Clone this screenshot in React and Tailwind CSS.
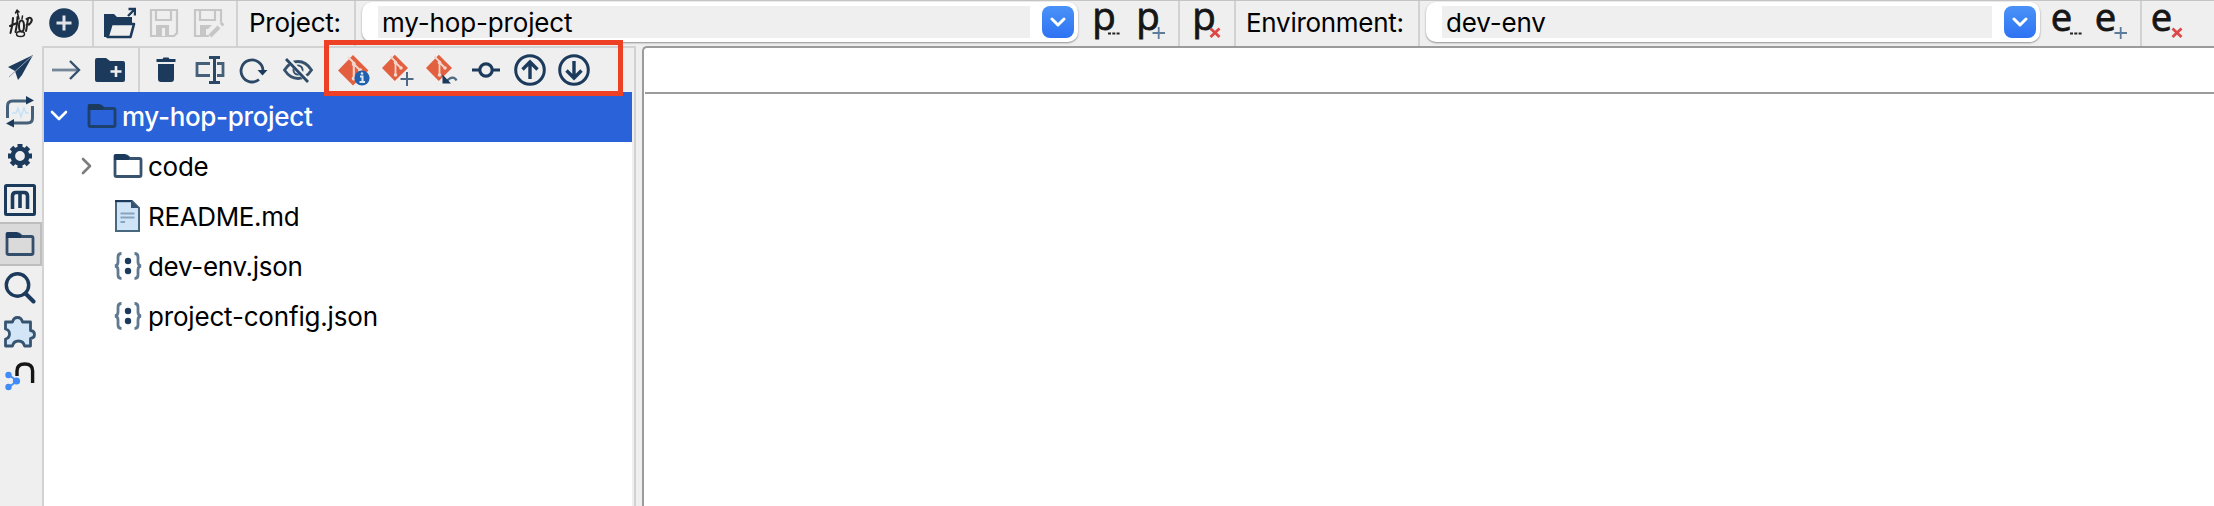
import React from "react";

const NAVY = "#1c3b5c";

const Icon = ({ children, className = "" }) => (
  <svg viewBox="0 0 32 32" width="32" height="32" fill="none" className={"shrink-0 " + className}>
    {children}
  </svg>
);

const Sep = ({ className = "" }) => <div className={"w-[2px] shrink-0 self-stretch bg-[#d2d2d2] " + className} />;

/* ---------- main toolbar ---------- */
const HopLogo = () => (
  <Icon>
    <g stroke="#222" strokeWidth="2" strokeLinecap="round" strokeLinejoin="round">
      <path d="M9 11c0 6-1 10-2.500 15M13.500 10c0 6-1 11-2 15M6 19l7-3" />
      <ellipse cx="17.500" cy="19" rx="2.500" ry="5.500" />
      <path d="M24 12c-1 5-1 8-2 12M22.500 12c4-3 7 0 4 4-1 2-3 2-4 2" />
      <path d="M15 12l-2-8M11.500 6l1.500-3 2 2M18 12l.5-3" strokeWidth="1.500" />
      <ellipse cx="16.500" cy="27" rx="4" ry="2.500" strokeWidth="1.500" />
    </g>
  </Icon>
);
const AddCircle = () => (
  <Icon>
    <circle cx="16" cy="16" r="14.800" fill={NAVY} />
    <path d="M16 8.500v15M8.500 16h15" stroke="#dfe3e7" strokeWidth="3" />
  </Icon>
);
const OpenFolder = () => (
  <Icon>
    <path d="M0 7h10l3 3h15v7H7L3 30H0z" fill={NAVY} />
    <path d="M7.500 17h22.500l-3.500 13H3.500z" fill="#efefef" stroke={NAVY} strokeWidth="2.600" strokeLinejoin="round" />
    <path d="M24 9l6-6M24.500 2H31v6.500" stroke={NAVY} strokeWidth="2.400" />
  </Icon>
);
const Save = () => (
  <Icon>
    <path d="M3 3h26v23l-3 3H3z" stroke="#c6c6c6" strokeWidth="2.200" />
    <path d="M8 3v10h15V3" stroke="#c6c6c6" strokeWidth="2.200" />
    <path d="M8 18h13v11H8z" fill="#c6c6c6" />
    <path d="M14 21h3v8h-3z" fill="#efefef" />
  </Icon>
);
const SaveAs = () => (
  <Icon>
    <path d="M17 29H3V3h26v12" stroke="#c6c6c6" strokeWidth="2.200" />
    <path d="M8 3v10h15V3" stroke="#c6c6c6" strokeWidth="2.200" />
    <path d="M8 18h12l-4 4-2 0v7H8z" fill="#c6c6c6" />
    <path d="M18 29l9-9M29 18l2-2" stroke="#c6c6c6" strokeWidth="4" />
  </Icon>
);

const Dots = () => <path d="M16 26.500h3M20.300 26.500h3M24.600 26.500h3" stroke="#222" strokeWidth="2.200" />;
const Plus = () => <path d="M22.700 20v12M16.500 26h12.500" stroke="#5d7b9b" strokeWidth="1.800" />;
const Cross = () => <path d="M18.500 21.500l9 8.500M27.500 21.500l-9 8.500" stroke="#dc4747" strokeWidth="2.800" />;
const GLYPHS = {
  p: { x: 0.3, y: 22.6, length: 23.5 },
  e: { x: -3.2, y: 23.8, length: 21.5 },
};
const LetterIcon = ({ letter, children, className = "" }) => (
  <Icon className={"overflow-visible " + className}>
    <text
      x={GLYPHS[letter].x}
      y={GLYPHS[letter].y}
      fontSize="38"
      fill="#161616"
      stroke="#161616"
      strokeWidth=".8"
      fontFamily="'Open Sans', 'Noto Sans', sans-serif"
      textLength={GLYPHS[letter].length}
      lengthAdjust="spacingAndGlyphs"
    >
      {letter}
    </text>
    {children}
  </Icon>
);

const Combo = ({ value, className }) => (
  <div className={"mt-[1px] flex h-[40px] shrink-0 items-start rounded-[10px] bg-white shadow-[0_1px_2px_rgba(0,0,0,0.4)] " + className}>
    <div className="mt-[4px] ml-[16px] flex h-[32px] flex-1 items-center bg-[#efefef] pt-[2px] pl-[4px]">
      <span className="text-[26px] leading-none tracking-[-0.15px]">{value}</span>
    </div>
    <div className="mt-[4px] mr-[4px] ml-[12px] flex size-[32px] items-center justify-center rounded-[8px] bg-linear-to-b from-[#4a92f8] to-[#2e72f2]">
      <svg width="16" height="10" viewBox="0 0 16 10" fill="none">
        <path d="M2 2l6 6 6-6" stroke="white" strokeWidth="3" strokeLinecap="round" strokeLinejoin="round" />
      </svg>
    </div>
  </div>
);

/* ---------- perspectives ---------- */
const Send = () => (
  <Icon>
    <path d="M29 3L4 15l7 4 3 9 4-5z" fill={NAVY} />
    <path d="M29 3L5 25" stroke="#8fa0b2" strokeWidth="1" />
  </Icon>
);
const Pipeline = () => (
  <Icon>
    <path d="M3.500 22V10q0-5 5-5h14M28.500 10v12q0 5-5 5H10" stroke="#456078" strokeWidth="3" />
    <path d="M22 0l8 4.500-8 4zM10 23l-8 4.500 8 4z" fill={NAVY} />
    <path d="M8 17h4l2-5 3 9 3-9 2 5h3" stroke="#c6e2f7" strokeWidth="1.600" />
  </Icon>
);
const Gear = () => (
  <Icon>
    <circle cx="16" cy="16" r="7.200" stroke={NAVY} strokeWidth="4.600" />
    <g stroke={NAVY} strokeWidth="5">
      <path d="M16 4v4M16 24v4M4 16h4M24 16h4M7.500 7.500l2.500 2.500M22 22l2.500 2.500M7.500 24.500l2.500-2.500M22 10l2.500-2.500" />
    </g>
  </Icon>
);
const Metadata = () => (
  <Icon>
    <rect x="1.500" y="1.500" width="29" height="29" rx="1" stroke={NAVY} strokeWidth="3" />
    <path d="M8.500 25V12q0-3.500 3.500-3.500h8q3.500 0 3.500 3.500v13M16 9v15" stroke={NAVY} strokeWidth="3.600" />
  </Icon>
);
const Folder = () => (
  <Icon>
    <path d="M3 6h12l3 2.500h9.500q1.500 0 1.500 1.500v15q0 1.500-1.500 1.500h-23q-1.500 0-1.500-1.500z" stroke={NAVY} strokeOpacity=".88" strokeWidth="2.800" strokeLinejoin="round" />
    <path d="M2 5.500q0-1.500 1.500-1.500h9.500l4.500 3.500v2.500H2z" fill={NAVY} />
  </Icon>
);
const Search = () => (
  <Icon>
    <circle cx="13.500" cy="13" r="11.200" stroke={NAVY} strokeWidth="3.400" />
    <path d="M21.500 21.500l8 8" stroke={NAVY} strokeWidth="4" strokeLinecap="round" />
  </Icon>
);
const Puzzle = () => (
  <Icon>
    <path d="M1.500 6h7q1-4.500 5-4.500T18.500 6h8v8.500q4 .5 4 4t-4 4V30h-6q-1-5-6-5t-6 5h-7v-7q4-1 4-5t-4-5z" fill="#d3e6f7" stroke="#36536f" strokeWidth="2.800" strokeLinejoin="round" />
  </Icon>
);
const Neo = () => (
  <Icon>
    <path d="M13 16v-5q0-7 7.800-7t7.800 7v12" stroke="#151515" strokeWidth="3.400" />
    <path d="M5 15l8 6-8 6" stroke="#4990f5" strokeWidth="2" />
    <g fill="#3f8cf8">
      <circle cx="4.500" cy="15" r="3.200" />
      <circle cx="12.500" cy="21" r="3.600" />
      <circle cx="4.500" cy="27" r="3.200" />
    </g>
  </Icon>
);

/* ---------- explorer toolbar ---------- */
const ArrowRight = () => (
  <Icon>
    <path d="M2 16h26" stroke="#73869a" strokeWidth="2.800" />
    <path d="M20 7l9 9-9 9" stroke="#36516d" strokeWidth="2.400" />
  </Icon>
);
const NewFolder = () => (
  <Icon>
    <path d="M3 4h9l4 3h13q2 0 2 2v17q0 2-2 2H3q-2 0-2-2V6q0-2 2-2z" fill={NAVY} />
    <path d="M22 12v11M16.500 17.500h11" stroke="#efefef" strokeWidth="2.600" />
  </Icon>
);
const Trash = () => (
  <Icon>
    <path d="M6.500 5h6l1-1.500h5l1 1.500h6v3h-19zM8 10h16v15q0 3-3 3H11q-3 0-3-3z" fill={NAVY} />
  </Icon>
);
const Rename = () => (
  <Icon>
    <path d="M16 9.500H3v12h13M23 9.500h6v12h-6" stroke="#456078" strokeWidth="2.800" />
    <path d="M20.500 4v24M15 3.500h11M15 28.500h11" stroke="#2b4867" strokeWidth="3" />
  </Icon>
);
const Refresh = () => (
  <Icon>
    <path d="M21 25.500A11 11 0 1 1 25 16" stroke="#2b4867" strokeWidth="2.800" />
    <path d="M19.500 16h10l-5 5.500z" fill={NAVY} />
  </Icon>
);
const EyeOff = () => (
  <Icon>
    <path d="M2.500 16Q8 7.500 16 7.500T29.500 16Q24 24.500 16 24.500T2.500 16z" stroke="#36516d" strokeWidth="2.800" />
    <circle cx="16" cy="16" r="4.500" stroke="#36516d" strokeWidth="2" />
    <path d="M5 4l22 24" stroke="#efefef" strokeWidth="5" />
    <path d="M4 5l22 23" stroke="#2b4867" strokeWidth="2.800" />
  </Icon>
);
const GitMark = () => (
  <>
    <path d="M12.800 .8L26 14 12.800 27 0 14z" fill="#e25f3f" />
    <path d="M8.500 2.500l5 5v14M13.500 8.500l5.500 5.500" stroke="#f3d5cb" strokeWidth="1.800" />
    <circle cx="13.500" cy="8.500" r="1.800" fill="#f3d5cb" />
    <circle cx="13.500" cy="21" r="1.800" fill="#f3d5cb" />
    <circle cx="19" cy="14" r="1.800" fill="#f3d5cb" />
  </>
);
const GitInfo = () => (
  <Icon>
    <g transform="scale(1.170)"><GitMark /></g>
    <circle cx="24" cy="24" r="7.600" fill="#2160ad" />
    <path d="M22 22.500h2.500v5M21.500 28h5.500" stroke="#dbe7f4" strokeWidth="2" />
    <circle cx="24" cy="19.500" r="1.300" fill="#dbe7f4" />
  </Icon>
);
const GitAdd = () => (
  <Icon>
    <GitMark />
    <path d="M25 18v14M18.500 25h13" stroke="#4e6983" strokeWidth="2" />
  </Icon>
);
const GitRevert = () => (
  <Icon>
    <GitMark />
    <path d="M30.500 26.500q-3-6-10 .5" stroke="#4e6983" strokeWidth="2.400" />
    <path d="M16.500 20.500v9h8.500z" fill={NAVY} />
  </Icon>
);
const Commit = () => (
  <Icon>
    <path d="M2 16h8M22 16h8" stroke={NAVY} strokeWidth="3.200" />
    <circle cx="16" cy="16" r="6.200" stroke={NAVY} strokeWidth="3.200" />
  </Icon>
);
const Push = () => (
  <Icon>
    <circle cx="16" cy="16" r="14.300" stroke={NAVY} strokeWidth="3" />
    <path d="M16 25V8M8.500 15.500L16 8l7.500 7.500" stroke={NAVY} strokeWidth="3.400" />
  </Icon>
);
const Pull = () => (
  <Icon>
    <circle cx="16" cy="16" r="14.300" stroke={NAVY} strokeWidth="3" />
    <path d="M16 7v17M8.500 16.500L16 24l7.500-7.500" stroke={NAVY} strokeWidth="3.400" />
  </Icon>
);

/* ---------- file tree ---------- */
const FileText = () => (
  <Icon>
    <path d="M4 1h16l7 7v23H4z" fill="#cfe4f7" stroke="#4a6780" strokeWidth="2" />
    <path d="M3 1h17" stroke={NAVY} strokeWidth="2.400" />
    <path d="M19 0l8 8h-8z" fill="#36536f" />
    <path d="M8.500 13.500h14M8.500 17.500h14M8.500 22h4.500" stroke="#88a3bd" strokeWidth="1.800" />
  </Icon>
);
const Json = () => (
  <Icon>
    <path d="M9.500 3.500Q6 3.500 6 7v5q0 3.500-3 4 3 .5 3 4v5q0 3.500 3.500 3.500M22.500 3.500Q26 3.500 26 7v5q0 3.500 3 4-3 .5-3 4v5q0 3.500-3.500 3.500" stroke="#607990" strokeWidth="2.800" />
    <circle cx="16" cy="11" r="3.200" fill={NAVY} />
    <circle cx="16" cy="21" r="3.200" fill={NAVY} />
  </Icon>
);

const TreeRow = ({ icon, label, tracking = "tracking-[-0.25px]", children }) => (
  <div className="flex h-[50px] items-center pb-[2px] pl-[20px]">
    <div className="w-[48px] shrink-0">{children}</div>
    {icon}
    <span className={"mt-[2px] ml-[4px] text-[26px] leading-none " + tracking}>{label}</span>
  </div>
);

export default function App() {
  return (
    <div className="flex h-[506px] w-[2214px] flex-col overflow-hidden bg-[#efefef] font-[Inter,sans-serif] text-black">
      <div className="h-px shrink-0 bg-[#c4c4c4]" />
      <header className="flex h-[45px] shrink-0 items-start whitespace-nowrap">
        <div className="mt-[6px] ml-[4px] flex gap-[12px]">
          <HopLogo />
          <AddCircle />
        </div>
        <Sep className="ml-[12px]" />
        <div className="mt-[6px] ml-[10px] flex gap-[12px]">
          <OpenFolder />
          <Save />
          <SaveAs />
        </div>
        <Sep className="ml-[12px]" />
        <span className="mt-[9px] ml-[11px] w-[105px] text-[26px] leading-none tracking-[-0.25px]">Project:</span>
        <Sep />
        <Combo value="my-hop-project" className="ml-[6px] w-[716px]" />
        <div className="mt-[6px] ml-[14px] flex gap-[12px]">
          <LetterIcon letter="p"><Dots /></LetterIcon>
          <LetterIcon letter="p"><Plus /></LetterIcon>
        </div>
        <Sep className="ml-[10px]" />
        <LetterIcon letter="p" className="mt-[6px] ml-[12px]"><Cross /></LetterIcon>
        <Sep className="ml-[10px]" />
        <span className="mt-[9px] ml-[10px] w-[172px] text-[26px] leading-none tracking-[-0.28px]">Environment:</span>
        <Sep />
        <Combo value="dev-env" className="ml-[6px] w-[614px]" />
        <div className="mt-[6px] ml-[14px] flex gap-[12px]">
          <LetterIcon letter="e"><Dots /></LetterIcon>
          <LetterIcon letter="e"><Plus /></LetterIcon>
        </div>
        <Sep className="ml-[10px]" />
        <LetterIcon letter="e" className="mt-[6px] ml-[12px]"><Cross /></LetterIcon>
      </header>

      <div className="flex min-h-0 flex-1">
        <nav className="flex w-[42px] shrink-0 flex-col pt-[6px]">
          <div className="flex flex-col gap-[12px] pb-[6px] pl-[4px]">
            <Send />
            <Pipeline />
            <Gear />
            <Metadata />
          </div>
          <div className="flex h-[44px] items-center border-y-2 border-r-2 border-[#bdbdbd] bg-[#dadada] pl-[4px]">
            <Folder />
          </div>
          <div className="flex flex-col gap-[12px] pt-[6px] pl-[4px]">
            <Search />
            <Puzzle />
            <Neo />
          </div>
        </nav>

        <aside className="flex w-[594px] shrink-0 flex-col border-t-2 border-r-2 border-l-2 border-[#d2d2d2]">
          <div className="relative flex h-[44px] shrink-0 items-center pl-[6px]">
            <div className="flex gap-[12px]">
              <ArrowRight />
              <NewFolder />
            </div>
            <Sep className="ml-[12px]" />
            <div className="ml-[10px] flex gap-[12px]">
              <Trash />
              <Rename />
              <Refresh />
              <EyeOff />
            </div>
            <div className="ml-[24px] flex gap-[12px]">
              <GitInfo />
              <GitAdd />
              <GitRevert />
              <Commit />
              <Push />
              <Pull />
            </div>
            <div className="absolute top-[-8px] left-[280px] z-10 h-[56px] w-[299px] border-[5px] border-[#ee4025]" />
          </div>
          <div className="mr-[2px] flex flex-1 flex-col bg-white">
            <div className="flex h-[50px] shrink-0 items-center bg-[#2a62d9] pb-[2px] text-white">
              <svg width="20" height="14" viewBox="0 0 20 14" fill="none" className="ml-[5px] shrink-0">
                <path d="M3 3l7 7 7-7" stroke="white" strokeWidth="2.600" strokeLinecap="round" strokeLinejoin="round" />
              </svg>
              <div className="ml-[17px] flex"><Folder /></div>
              <span className="mt-[2px] ml-[4px] text-[26px] leading-none font-medium tracking-[-0.33px]">my-hop-project</span>
            </div>
            <TreeRow icon={<Folder />} label="code">
              <svg width="12" height="18" viewBox="0 0 12 18" fill="none" className="ml-[17px]">
                <path d="M2 2l7 7-7 7" stroke="#7d7d7d" strokeWidth="2.600" strokeLinecap="round" strokeLinejoin="round" />
              </svg>
            </TreeRow>
            <TreeRow icon={<FileText />} label="README.md" tracking="tracking-[-0.35px]" />
            <TreeRow icon={<Json />} label="dev-env.json" tracking="tracking-[-0.3px]" />
            <TreeRow icon={<Json />} label="project-config.json" tracking="tracking-[-0.18px]" />
          </div>
        </aside>

        <main className="ml-[6px] flex flex-1 flex-col rounded-tl-[5px] border-t-2 border-l-2 border-[#9b9b9b] bg-white">
          <div className="ml-px h-[46px] shrink-0 border-b-2 border-[#9b9b9b]" />
        </main>
      </div>
    </div>
  );
}
